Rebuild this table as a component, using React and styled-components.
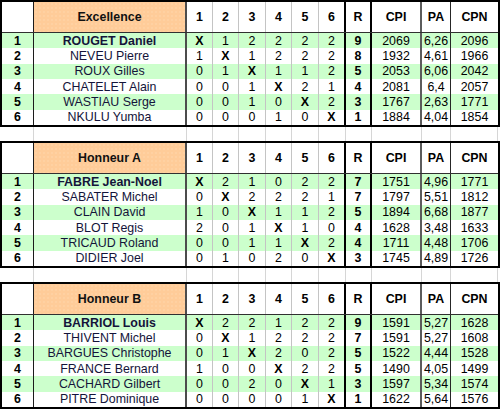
import React from 'react';
import styled, { createGlobalStyle } from 'styled-components';

const GlobalStyle = createGlobalStyle`
  html, body {
    margin: 0;
    padding: 0;
    background: #ffffff;
  }
  body {
    font-family: "Liberation Sans", Arial, sans-serif;
    font-size: 12px;
    color: #000;
  }
`;

const LINES = {
  dark1: '1px solid #1c1c1c',
  dark2: '2px solid #4c4c4c',
  light: '1px solid #c4c4c4',
  black2: '2px solid #000000',
  gray2: '2px solid #5c5c5c',
  black1: '1px solid #262626',
  none: 'none',
};

const COLS = [
  { w: 32, line: 'dark1' },
  { w: 153, line: 'dark2' },
  { w: 26, line: 'light' },
  { w: 26, line: 'light' },
  { w: 27, line: 'light' },
  { w: 26, line: 'light' },
  { w: 27, line: 'light' },
  { w: 27, line: 'black2' },
  { w: 26, line: 'black2' },
  { w: 50, line: 'gray2' },
  { w: 29, line: 'black1' },
  { w: 47, line: 'none' },
];

const HEADS = ['1', '2', '3', '4', '5', '6', 'R', 'CPI', 'PA', 'CPN'];

const GROUPS = [
  {
    title: 'Excellence',
    rows: [
      ['ROUGET Daniel', 'X 1 2 2 2 2', '9', '2069', '6,26', '2096'],
      ['NEVEU Pierre', '1 X 1 2 2 2', '8', '1932', '4,61', '1966'],
      ['ROUX Gilles', '0 1 X 1 1 2', '5', '2053', '6,06', '2042'],
      ['CHATELET Alain', '0 0 1 X 2 1', '4', '2081', '6,4', '2057'],
      ['WASTIAU Serge', '0 0 1 0 X 2', '3', '1767', '2,63', '1771'],
      ['NKULU Yumba', '0 0 0 1 0 X', '1', '1884', '4,04', '1854'],
    ],
  },
  {
    title: 'Honneur A',
    rows: [
      ['FABRE Jean-Noel', 'X 2 1 0 2 2', '7', '1751', '4,96', '1771'],
      ['SABATER Michel', '0 X 2 2 2 1', '7', '1797', '5,51', '1812'],
      ['CLAIN David', '1 0 X 1 1 2', '5', '1894', '6,68', '1877'],
      ['BLOT Regis', '2 0 1 X 1 0', '4', '1628', '3,48', '1633'],
      ['TRICAUD Roland', '0 0 1 1 X 2', '4', '1711', '4,48', '1706'],
      ['DIDIER Joel', '0 1 0 2 0 X', '3', '1745', '4,89', '1726'],
    ],
  },
  {
    title: 'Honneur B',
    rows: [
      ['BARRIOL Louis', 'X 2 2 1 2 2', '9', '1591', '5,27', '1628'],
      ['THIVENT Michel', '0 X 1 2 2 2', '7', '1591', '5,27', '1608'],
      ['BARGUES Christophe', '0 1 X 2 0 2', '5', '1522', '4,44', '1528'],
      ['FRANCE Bernard', '1 0 0 X 2 2', '5', '1490', '4,05', '1499'],
      ['CACHARD Gilbert', '0 0 2 0 X 1', '3', '1597', '5,34', '1574'],
      ['PITRE Dominique', '0 0 0 0 1 X', '1', '1622', '5,64', '1576'],
    ],
  },
];

const Page = styled.div`
  display: flex;
  flex-direction: column;
  width: 500px;
`;

const Sheet = styled.div`
  box-sizing: border-box;
  width: 500px;
  border: 2px solid #000;
`;

const HeadRow = styled.div`
  display: flex;
  height: 30px;
  border-bottom: 1px solid #303030;
`;

const Body = styled.div`
  display: flex;
  flex-direction: column;
  height: 92px;
`;

const Row = styled.div`
  display: flex;
  flex: 1;
  background: ${({ $alt }) => ($alt ? '#ccffcc' : '#ffffff')};
`;

const Cell = styled.div`
  box-sizing: border-box;
  flex: none;
  width: ${({ $w }) => $w}px;
  border-right: ${({ $line }) => LINES[$line]};
  display: flex;
  align-items: center;
  justify-content: center;
  white-space: nowrap;
  overflow: hidden;
  font-size: 12.4px;
  font-weight: ${({ $bold }) => ($bold ? 700 : 400)};
  color: ${({ $ink }) => $ink || '#000'};
`;

const TitleCell = styled(Cell)`
  background-color: #ffcc99;
  background-image: radial-gradient(circle, rgba(255, 230, 205, 0.55) 0.5px, transparent 0.8px);
  background-size: 4px 4px;
  font-weight: 700;
  color: #111;
`;

const GapRow = styled.div`
  display: flex;
  height: 14px;
  padding-left: 2px;
`;

const GapCell = styled.div`
  box-sizing: border-box;
  flex: none;
  width: ${({ $w }) => $w}px;
  border-right: 1px solid #d6d6d6;
`;

function Table({ title, rows }) {
  return (
    <Sheet>
      <HeadRow>
        <Cell $w={COLS[0].w} $line={COLS[0].line} />
        <TitleCell $w={COLS[1].w} $line={COLS[1].line}>{title}</TitleCell>
        {HEADS.map((h, i) => (
          <Cell key={h} $w={COLS[i + 2].w} $line={COLS[i + 2].line} $bold>
            {h}
          </Cell>
        ))}
      </HeadRow>
      <Body>
        {rows.map(([name, games, r, cpi, pa, cpn], idx) => {
          const vals = games.split(' ');
          return (
            <Row key={name} $alt={idx % 2 === 0}>
              <Cell $w={COLS[0].w} $line={COLS[0].line} $bold>{idx + 1}</Cell>
              <Cell $w={COLS[1].w} $line={COLS[1].line} $bold={idx === 0} $ink="#14143a">
                {name}
              </Cell>
              {vals.map((v, i) => (
                <Cell key={i} $w={COLS[i + 2].w} $line={COLS[i + 2].line} $bold={v === 'X'}>
                  {v}
                </Cell>
              ))}
              <Cell $w={COLS[8].w} $line={COLS[8].line} $bold>{r}</Cell>
              <Cell $w={COLS[9].w} $line={COLS[9].line}>{cpi}</Cell>
              <Cell $w={COLS[10].w} $line={COLS[10].line}>{pa}</Cell>
              <Cell $w={COLS[11].w} $line={COLS[11].line}>{cpn}</Cell>
            </Row>
          );
        })}
      </Body>
    </Sheet>
  );
}

function Gap() {
  return (
    <GapRow>
      {COLS.map((c, i) => (
        <GapCell key={i} $w={c.w} />
      ))}
    </GapRow>
  );
}

export default function App() {
  return (
    <>
      <GlobalStyle />
      <Page>
        {GROUPS.map((g, i) => (
          <React.Fragment key={g.title}>
            {i > 0 && <Gap />}
            <Table title={g.title} rows={g.rows} />
          </React.Fragment>
        ))}
      </Page>
    </>
  );
}
